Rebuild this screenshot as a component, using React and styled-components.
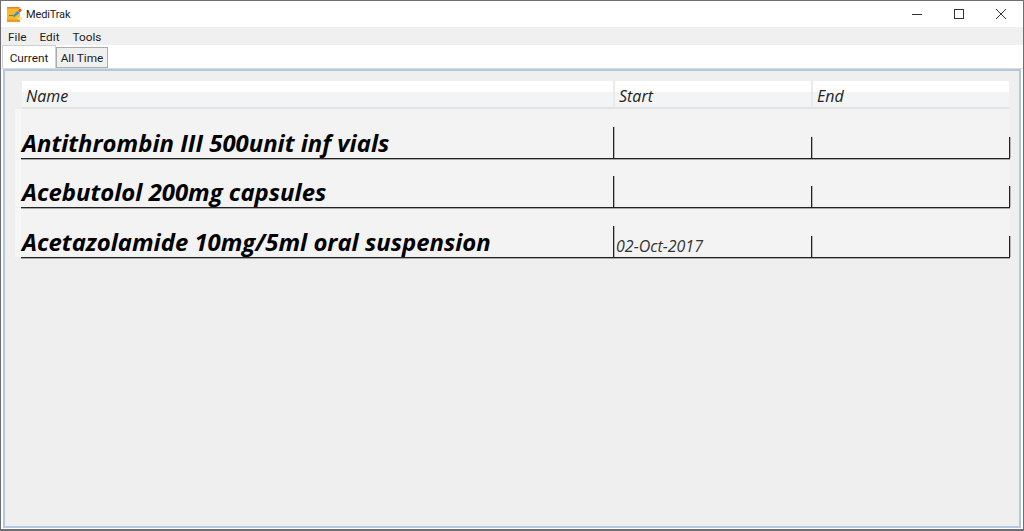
import styled, { createGlobalStyle } from "styled-components";

const GlobalStyle = createGlobalStyle`
  html, body {
    margin: 0;
    padding: 0;
    background: #fff;
  }
  body {
    font-family: "Open Sans", "Noto Sans", sans-serif;
    overflow: hidden;
  }
`;

const Window = styled.div`
  width: 1024px;
  height: 531px;
  box-sizing: border-box;
  border: 1px solid #6d6d78;
  border-bottom: 2px solid #6d6d78;
  display: flex;
  flex-direction: column;
  background: #fff;
`;

const TitleBar = styled.div`
  height: 26px;
  display: flex;
  align-items: center;
  flex-shrink: 0;
`;

const AppIcon = styled.svg`
  width: 15px;
  height: 15px;
  margin-left: 6px;
  margin-right: 4px;
`;

const Title = styled.span`
  font-family: Roboto, sans-serif;
  font-size: 11px;
  letter-spacing: -0.15px;
  color: #1a1a1a;
  flex: 1;
`;

const WinButtons = styled.div`
  display: flex;
  padding-right: 1px;
`;

const WinButton = styled.div`
  width: 42px;
  height: 26px;
  display: flex;
  align-items: center;
  justify-content: center;
  margin-top: -1px;
`;

const MenuBar = styled.div`
  height: 18px;
  box-sizing: border-box;
  padding: 1px 0 0 7px;
  background: #f0f0f0;
  display: flex;
  align-items: center;
  gap: 13px;
  flex-shrink: 0;
`;

const MenuItem = styled.span`
  font-family: Roboto, sans-serif;
  font-size: 11.8px;
  color: #222;
`;

const TabStrip = styled.div`
  height: 24px;
  box-sizing: border-box;
  display: flex;
  align-items: flex-start;
  padding-left: 1px;
  flex-shrink: 0;
  border-bottom: 1px solid #dcdcdc;
`;

const Tab = styled.div`
  box-sizing: border-box;
  font-family: Roboto, sans-serif;
  font-size: 11.8px;
  color: #1c1c1c;
  padding-top: 1px;
  display: flex;
  align-items: center;
  justify-content: center;
  width: ${(p) => (p.$active ? "54px" : "52px")};
  height: ${(p) => (p.$active ? "23px" : "21px")};
  margin-top: ${(p) => (p.$active ? "0" : "2px")};
  background: ${(p) => (p.$active ? "#fff" : "#f0f0f0")};
  border: 1px solid ${(p) => (p.$active ? "#d0d0d0" : "#acacac")};
  border-bottom: ${(p) => (p.$active ? "none" : "1px solid #acacac")};
`;

const Panel = styled.div`
  flex: 1;
  margin: 0 2px 1px 2px;
  border: 2px solid #b5c7dc;
  background: #efefef;
  padding: 10px 10px 0 10px;
  display: flex;
  flex-direction: column;
  min-height: 0;
`;

const HeaderRow = styled.div`
  display: grid;
  grid-template-columns: 593px 198px 196px;
  height: 28px;
  margin-left: 7px;
  width: 987px;
  background: linear-gradient(#fff 0 11px, #f3f4f6 11px 100%);
  border-bottom: 2px solid #e3e3e3;
  box-sizing: border-box;
`;

const HeaderCell = styled.div`
  font-size: 16px;
  font-style: italic;
  color: #222;
  padding: 4px 0 0 4px;
  border-right: 2px solid #eaeaea;
  line-height: 22px;
  &:last-child {
    border-right: none;
  }
`;

const Rows = styled.div`
  background: #f3f3f3;
  display: flex;
  flex-direction: column;
  width: 995px;
`;

const Row = styled.div`
  display: flex;
  height: 49.5px;
  box-sizing: border-box;
`;

const Gutter = styled.div`
  width: 6px;
  background: #f6f6f6;
  border-bottom: 1px solid #efefef;
  box-sizing: border-box;
`;

const RowBody = styled.div`
  display: grid;
  grid-template-columns: 593px 198px 198px;
  width: 989px;
  border-bottom: 1px solid #222;
  box-shadow: 0 1px 0 #a8a8a8;
  box-sizing: border-box;
  align-items: end;
`;

const NameCell = styled.div`
  height: 31px;
  box-sizing: border-box;
  border-right: 1px solid #222;
  box-shadow: 1px 0 0 #b4b4b4;
  font-size: 23.9px;
  font-weight: 700;
  font-style: italic;
  color: #000;
  padding-left: 1px;
  line-height: 31px;
  white-space: nowrap;
`;

const DateCell = styled.div`
  height: 21px;
  box-sizing: border-box;
  border-right: 1px solid #222;
  box-shadow: 1px 0 0 #b4b4b4;
  font-size: 16px;
  font-style: italic;
  color: #333;
  padding-left: 2px;
  line-height: 21px;
`;

const rows = [
  { name: "Antithrombin III 500unit inf vials", start: "", end: "" },
  { name: "Acebutolol 200mg capsules", start: "", end: "" },
  { name: "Acetazolamide 10mg/5ml oral suspension", start: "02-Oct-2017", end: "" },
];

export default function App() {
  return (
    <Window>
      <GlobalStyle />
      <TitleBar>
        <AppIcon viewBox="0 0 15 15">
          <rect x="0" y="0" width="13" height="15" fill="#f6bb2d" />
          <rect x="0" y="0" width="12" height="1.5" fill="#ee7a2c" />
          <rect x="0" y="12.5" width="13" height="2.5" fill="#ec9a24" />
          <rect x="10" y="10.5" width="5" height="2" fill="#fbdc70" />
          <path d="M2 8.5h4" stroke="#8c7420" strokeWidth="1" />
          <path d="M5.5 9l5-5 2 2-5 4z" fill="#3d8fd6" />
          <path d="M11 3.5l2-2 2 1.5-2 2.5z" fill="#e2503f" />
        </AppIcon>
        <Title>MediTrak</Title>
        <WinButtons>
          <WinButton>
            <svg width="10" height="10" viewBox="0 0 10 10">
              <path d="M0 5.5h10" stroke="#333" fill="none" />
            </svg>
          </WinButton>
          <WinButton>
            <svg width="10" height="10" viewBox="0 0 10 10">
              <rect x="0.5" y="0.5" width="9" height="9" stroke="#333" fill="none" />
            </svg>
          </WinButton>
          <WinButton>
            <svg width="10" height="10" viewBox="0 0 10 10">
              <path d="M0 0l10 10M10 0L0 10" stroke="#333" fill="none" />
            </svg>
          </WinButton>
        </WinButtons>
      </TitleBar>
      <MenuBar>
        <MenuItem>File</MenuItem>
        <MenuItem>Edit</MenuItem>
        <MenuItem>Tools</MenuItem>
      </MenuBar>
      <TabStrip>
        <Tab $active>Current</Tab>
        <Tab>All Time</Tab>
      </TabStrip>
      <Panel>
        <HeaderRow>
          <HeaderCell>Name</HeaderCell>
          <HeaderCell>Start</HeaderCell>
          <HeaderCell>End</HeaderCell>
        </HeaderRow>
        <Rows>
          {rows.map((r) => (
            <Row key={r.name}>
              <Gutter />
              <RowBody>
                <NameCell>{r.name}</NameCell>
                <DateCell>{r.start}</DateCell>
                <DateCell>{r.end}</DateCell>
              </RowBody>
            </Row>
          ))}
        </Rows>
      </Panel>
    </Window>
  );
}
